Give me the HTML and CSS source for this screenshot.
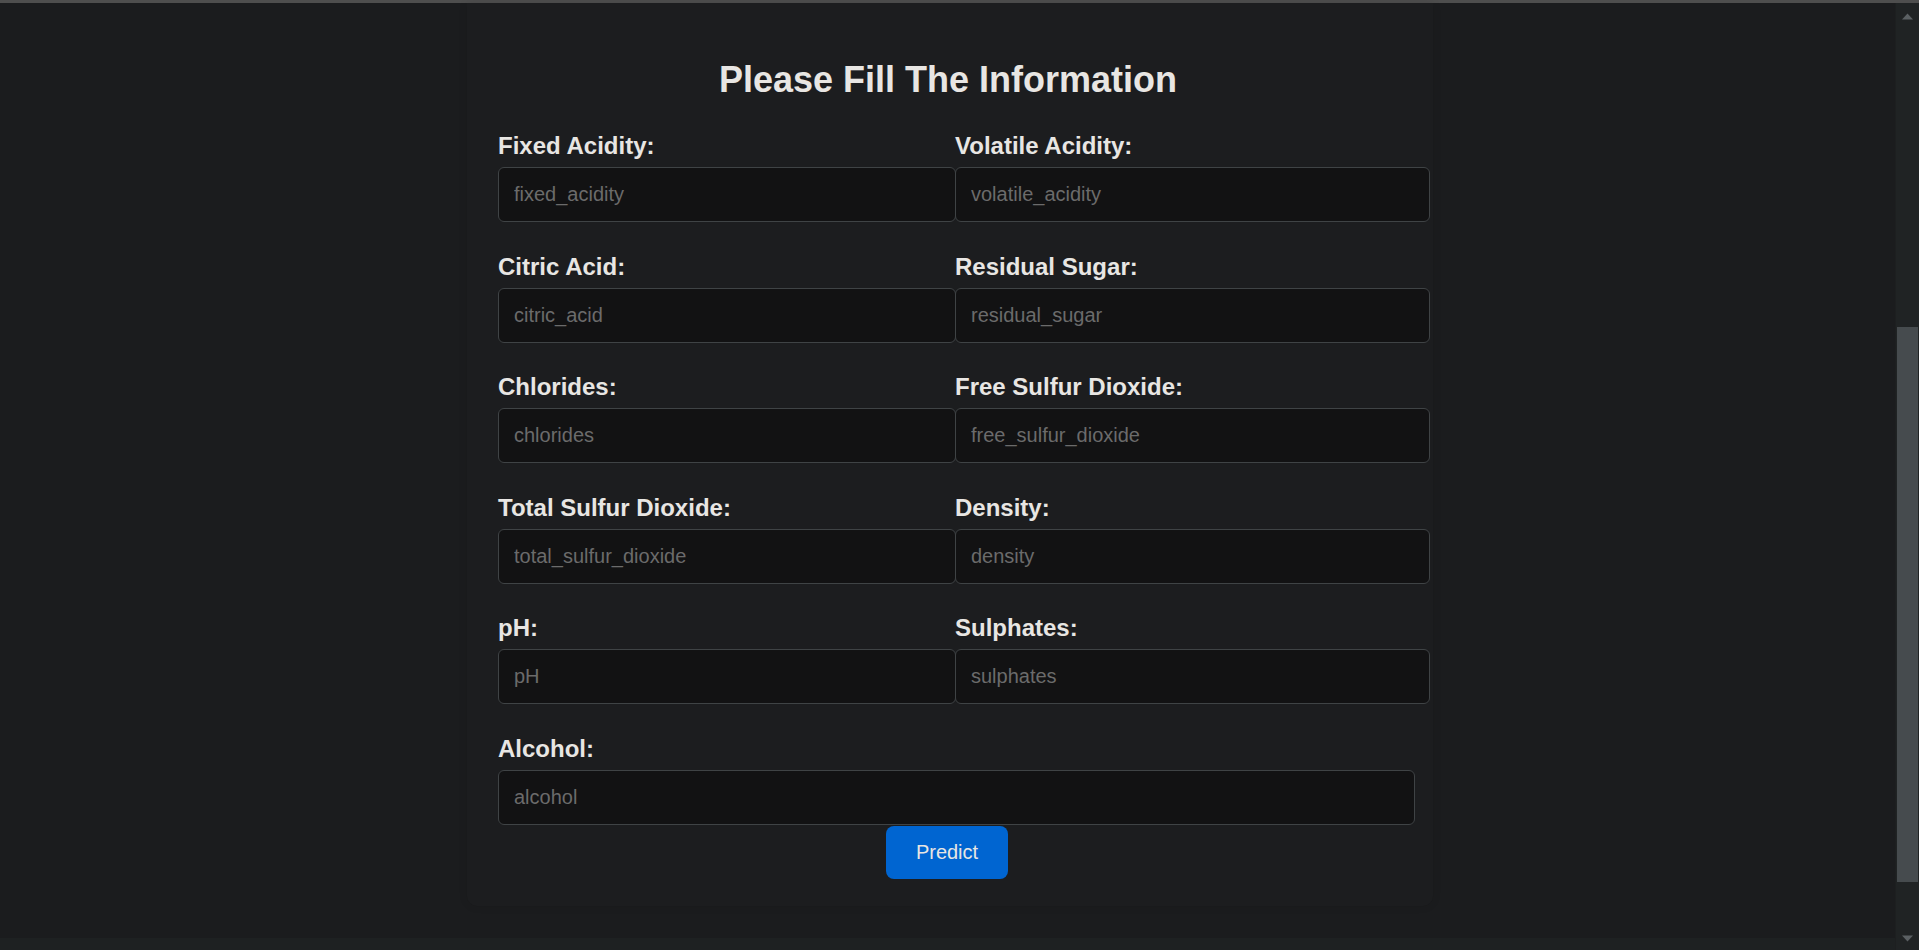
FILE: index.html
```html
<!DOCTYPE html>
<html lang="en">
<head>
<meta charset="utf-8">
<title>Wine Quality Prediction</title>
<link rel="stylesheet" href="styles.css">
</head>
<body>
<div class="topline"></div>
<div class="viewport">
  <div class="page">
    <main class="main">
      <section class="card">
        <h1 class="title">Please Fill The Information</h1>
        <form class="form">
          <div class="grid">
            <div class="group left">
              <label class="label">Fixed Acidity:</label>
              <input class="field" type="text" placeholder="fixed_acidity">
            </div>
            <div class="group right">
              <label class="label">Volatile Acidity:</label>
              <input class="field" type="text" placeholder="volatile_acidity">
            </div>
            <div class="group left">
              <label class="label">Citric Acid:</label>
              <input class="field" type="text" placeholder="citric_acid">
            </div>
            <div class="group right">
              <label class="label">Residual Sugar:</label>
              <input class="field" type="text" placeholder="residual_sugar">
            </div>
            <div class="group left">
              <label class="label">Chlorides:</label>
              <input class="field" type="text" placeholder="chlorides">
            </div>
            <div class="group right">
              <label class="label">Free Sulfur Dioxide:</label>
              <input class="field" type="text" placeholder="free_sulfur_dioxide">
            </div>
            <div class="group left">
              <label class="label">Total Sulfur Dioxide:</label>
              <input class="field" type="text" placeholder="total_sulfur_dioxide">
            </div>
            <div class="group right">
              <label class="label">Density:</label>
              <input class="field" type="text" placeholder="density">
            </div>
            <div class="group left">
              <label class="label">pH:</label>
              <input class="field" type="text" placeholder="pH">
            </div>
            <div class="group right">
              <label class="label">Sulphates:</label>
              <input class="field" type="text" placeholder="sulphates">
            </div>
            <div class="group full">
              <label class="label">Alcohol:</label>
              <input class="field" type="text" placeholder="alcohol">
            </div>
          </div>
          <div class="actions">
            <button class="btn" type="button">Predict</button>
          </div>
        </form>
      </section>
    </main>
    <div class="bottomband"></div>
  </div>
  <aside class="scrollbar">
    <svg class="arrow" width="11" height="7" viewBox="0 0 11 7"><path d="M0 6.5 L5.5 0.5 L11 6.5 Z" fill="#5b6063"/></svg>
    <div class="track">
      <div class="thumb"></div>
    </div>
    <svg class="arrow" width="11" height="7" viewBox="0 0 11 7"><path d="M0 0.5 L5.5 6.5 L11 0.5 Z" fill="#5b6063"/></svg>
  </aside>
</div>
</body>
</html>
```

FILE: styles.css
```css
html, body {
  margin: 0;
  padding: 0;
  height: 950px;
  overflow: hidden;
  background: #1b1c1e;
  font-family: "Liberation Sans", Arial, sans-serif;
  color: #e8e6e3;
}

.topline {
  height: 3px;
  background: #4e4e4e;
}

.viewport {
  display: flex;
  height: 947px;
}

.page {
  flex: 1;
  display: flex;
  flex-direction: column;
  min-width: 0;
}

.main {
  flex: 1;
  display: flex;
  justify-content: center;
  align-items: flex-start;
  padding-left: 4px;
}

.card {
  width: 966px;
  box-sizing: border-box;
  padding: 56px 34.5px 27px 31.5px;
  background: #1c1d1f;
  box-shadow: 0 0 8px rgba(0, 0, 0, 0.1);
  border-radius: 0 0 10px 10px;
}

.title {
  margin: 0 0 30px;
  font-size: 36px;
  line-height: 42px;
  font-weight: bold;
  text-align: center;
  color: #e8e6e3;
}

.form {
  margin: 0;
}

.grid {
  display: grid;
  grid-template-columns: 457px 443px;
  row-gap: 29.5px;
}

.group {
  min-width: 0;
}

.full {
  grid-column: 1 / -1;
}

.label {
  display: block;
  font-size: 24px;
  line-height: 29px;
  font-weight: bold;
  margin-bottom: 7px;
  color: #e8e6e3;
  white-space: nowrap;
}

.field {
  display: block;
  box-sizing: border-box;
  height: 55px;
  padding: 0 15px;
  margin: 0;
  font-family: "Liberation Sans", Arial, sans-serif;
  font-size: 20px;
  color: #e8e6e3;
  background: #121213;
  border: 1px solid #3f4345;
  border-radius: 6px;
  outline: none;
}

.field::placeholder {
  color: #6b6b6b;
}

.left .field {
  width: 458px;
}

.right .field {
  width: 475px;
}

.full .field {
  width: 917px;
}

.actions {
  display: flex;
  padding-left: 388px;
  margin-top: 1px;
}

.btn {
  width: 122px;
  height: 53px;
  padding: 0;
  border: none;
  border-radius: 8px;
  background: #0065d1;
  color: #e8e6e3;
  font-family: "Liberation Sans", Arial, sans-serif;
  font-size: 20px;
}

.bottomband {
  height: 12px;
  background: #1e2122;
}

.scrollbar {
  width: 24px;
  display: flex;
  flex-direction: column;
  align-items: center;
  background: #202324;
  box-shadow: inset 1px 0 0 #1d1f20;
}

.arrow {
  display: block;
  margin: 10px 0 0;
  flex: none;
}

.scrollbar .arrow:last-child {
  margin: 0 0 8px;
}

.track {
  flex: 1;
  width: 100%;
  display: flex;
  flex-direction: column;
  align-items: flex-end;
  padding-top: 307px;
  box-sizing: border-box;
}

.thumb {
  width: 21px;
  height: 555px;
  margin-right: 1px;
  background: #464b4e;
}
```
